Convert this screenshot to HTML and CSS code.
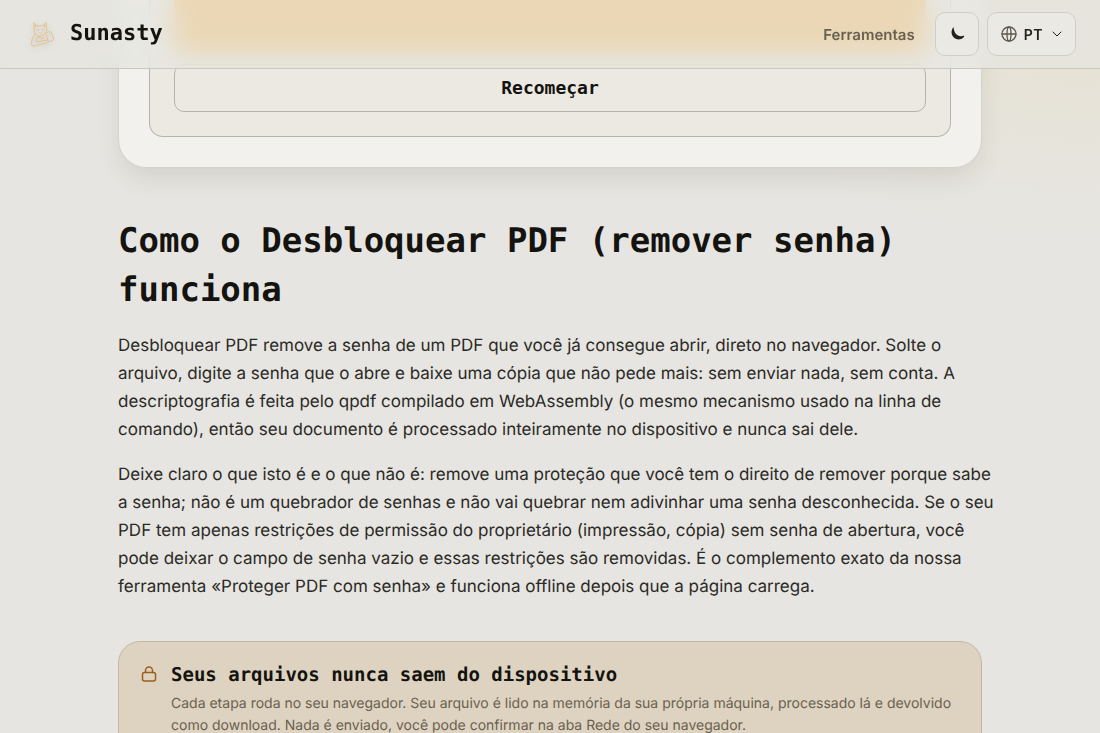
FILE: index.html
```html
<!DOCTYPE html>
<html lang="pt">
<head>
    <meta charset="UTF-8">
    <meta name="viewport" content="width=device-width, initial-scale=1.0">
    <title>Desbloquear PDF - Sunasty</title>
    <link rel="stylesheet" href="styles.css">
</head>
<body>
    <header class="topbar">
        <a class="brand" href="#">
            <svg class="brand-logo" viewBox="0 0 28 28" aria-hidden="true">
                <path d="M6 3 L6 10 Q6 15 11 16 Q17 16 18.500 11 L18 2.500 L14.500 6 Q12 5 9.500 6Z"/>
                <path d="M9 10h1.500M14 10h1.500M11.500 12.500l1 1 1-1M7.500 5v2M16.500 5v2"/>
                <path d="M7 14 Q3.500 18 3.500 23 Q3 26 6 26 L20 22.500 Q22 21 19 20 L9 22 Q7 20 9 17"/>
                <path d="M18.500 13 Q20 11 23 12 L25.500 18 Q26 21 22 21.500M18 14l2 6M10 17q3 2 6 1"/>
            </svg>
            <span>Sunasty</span>
        </a>
        <nav class="topbar-nav">
            <a class="nav-link" href="#">Ferramentas</a>
            <div class="nav-actions">
                <button class="icon-button" type="button" aria-label="Tema">
                    <svg class="icon-moon" viewBox="0 0 16 16" aria-hidden="true">
                        <path d="M4.500 1 C-0.500 7.500 5 14.500 11 13.300 C13.500 13 15 11.500 15.200 9.500 C9.500 12 5 8 4.500 1Z"/>
                    </svg>
                </button>
                <button class="lang-button" type="button" aria-label="Idioma">
                    <svg class="icon-globe" viewBox="0 0 16 16" aria-hidden="true">
                        <circle cx="8" cy="8" r="7"/>
                        <ellipse cx="8" cy="8" rx="2" ry="7"/>
                        <path d="M1 8h14"/>
                    </svg>
                    <span>PT</span>
                    <svg class="icon-chevron" viewBox="0 0 10 10" aria-hidden="true">
                        <path d="M1 3l4 4 4-4"/>
                    </svg>
                </button>
            </div>
        </nav>
    </header>

    <main class="page">
        <section class="tool-card">
            <div class="tool-panel">
                <button class="primary-button" type="button" aria-label="Desbloquear"></button>
                <button class="reset-button" type="button">Recomeçar</button>
            </div>
        </section>

        <section class="about">
            <h2>Como o Desbloquear PDF (remover senha) funciona</h2>
            <p>Desbloquear PDF remove a senha de um PDF que você já consegue abrir, direto no navegador. Solte o arquivo, digite a senha que o abre e baixe uma cópia que não pede mais: sem enviar nada, sem conta. A descriptografia é feita pelo qpdf compilado em WebAssembly (o mesmo mecanismo usado na linha de comando), então seu documento é processado inteiramente no dispositivo e nunca sai dele.</p>
            <p>Deixe claro o que isto é e o que não é: remove uma proteção que você tem o direito de remover porque sabe a senha; não é um quebrador de senhas e não vai quebrar nem adivinhar uma senha desconhecida. Se o seu PDF tem apenas restrições de permissão do proprietário (impressão, cópia) sem senha de abertura, você pode deixar o campo de senha vazio e essas restrições são removidas. É o complemento exato da nossa ferramenta «Proteger PDF com senha» e funciona offline depois que a página carrega.</p>
        </section>

        <aside class="privacy">
            <svg class="icon-lock" viewBox="0 0 16 16" aria-hidden="true">
                <rect x="1.500" y="6.500" width="13" height="8.500" rx="2"/>
                <path d="M4.500 6.500V4.500a3.500 3.500 0 0 1 7 0v2"/>
            </svg>
            <div>
                <h3>Seus arquivos nunca saem do dispositivo</h3>
                <p>Cada etapa roda no seu navegador. Seu arquivo é lido na memória da sua própria máquina, processado lá e devolvido como download. Nada é enviado, você pode confirmar na aba Rede do seu navegador.</p>
            </div>
        </aside>
    </main>
</body>
</html>
```

FILE: styles.css
```css
* {
    box-sizing: border-box;
}
html {
    scrollbar-width: none;
}
body {
    margin: 0;
    font-family: Inter, "Liberation Sans", sans-serif;
    text-rendering: geometricPrecision;
    color: #2b2a26;
    background: radial-gradient(ellipse 420px 240px at 100% 0, #e6e1d1, rgba(230, 225, 209, 0)) no-repeat #e6e5e1;
}
h2, h3, p {
    margin: 0;
}
button {
    font: inherit;
    color: inherit;
    cursor: pointer;
}
svg {
    flex: none;
    fill: none;
    stroke: currentColor;
    stroke-linecap: round;
    stroke-linejoin: round;
}

/* top bar */
.topbar {
    position: fixed;
    top: 0;
    left: 0;
    right: 0;
    z-index: 10;
    display: flex;
    align-items: center;
    justify-content: space-between;
    padding: 12px 24px;
    border-bottom: 1px solid #c9c8c2;
    background: rgba(230, 230, 224, 0.7);
    backdrop-filter: blur(12px);
}
.brand {
    display: flex;
    align-items: center;
    gap: 14px;
    padding-left: 4px;
    font-family: "DejaVu Sans Mono", monospace;
    font-size: 22px;
    line-height: 30px;
    font-weight: 700;
    color: #14130f;
    text-decoration: none;
}
.brand-logo {
    width: 28px;
    height: 28px;
    color: #e9c08c;
    filter: drop-shadow(0 2px 3px rgba(60, 60, 50, 0.2));
}
.topbar-nav {
    display: flex;
    align-items: center;
    gap: 20px;
}
.nav-link {
    font-size: 15px;
    font-weight: 600;
    color: #6a604f;
    text-decoration: none;
}
.nav-actions {
    display: flex;
    gap: 8px;
}
.icon-button, .lang-button {
    display: flex;
    align-items: center;
    justify-content: center;
    height: 44px;
    border: 1px solid #cfcdc6;
    border-radius: 10px;
    background: #ebe9e3;
    color: #22211d;
}
.icon-button {
    width: 44px;
    padding: 0;
}
.lang-button {
    gap: 7px;
    padding: 0 13px;
    font-size: 14px;
    font-weight: 600;
    letter-spacing: 0.5px;
}
.icon-moon {
    width: 16px;
    height: 16px;
    fill: currentColor;
    stroke: none;
}
.icon-globe {
    width: 16px;
    height: 16px;
    color: #5c584e;
    stroke-width: 1.3;
}
.icon-chevron {
    width: 10px;
    height: 10px;
    margin-left: 2px;
}

/* content */
.page {
    max-width: 912px;
    margin: 0 auto;
    padding: 0 24px 48px;
}
.tool-card {
    padding: 0 30px 30px;
    border: 1px solid #d3d2cb;
    border-top: 0;
    border-radius: 0 0 28px 28px;
    background: #f2f1ed;
    box-shadow: 0 12px 28px -6px rgba(70, 66, 40, 0.14);
}
.tool-panel {
    display: flex;
    flex-direction: column;
    gap: 12px;
    padding: 0 24px 24px;
    border: 1px solid #b5b3ac;
    border-top: 0;
    border-radius: 0 0 14px 14px;
    background: #ece9e3;
}
.primary-button {
    height: 52px;
    border: 0;
    border-radius: 0 0 10px 10px;
    background: #f7b550;
}
.reset-button {
    height: 48px;
    padding: 0 0 2px;
    border: 1px solid #b5b3ac;
    border-radius: 10px;
    background: #ece9e3;
    font-family: "DejaVu Sans Mono", monospace;
    font-size: 18px;
    font-weight: 700;
    color: #14130f;
}
.about {
    display: flex;
    flex-direction: column;
    gap: 17px;
    margin: 49px -16px 0 0;
    font-size: 17px;
    line-height: 28px;
}
.about h2 {
    font-family: "DejaVu Sans Mono", monospace;
    font-size: 34px;
    line-height: 49px;
    color: #14130f;
}
.privacy {
    display: flex;
    gap: 14px;
    margin-top: 40px;
    padding: 20px 22px;
    border: 1px solid #c4b8a5;
    border-radius: 22px;
    background: #ddd3c0;
}
.icon-lock {
    width: 16px;
    height: 16px;
    margin-top: 4px;
    color: #9c5f1c;
    stroke-width: 1.5;
}
.privacy h3 {
    font-family: "DejaVu Sans Mono", monospace;
    font-size: 19px;
    line-height: 26px;
    color: #14130f;
}
.privacy p {
    margin-top: 5px;
    font-size: 14px;
    line-height: 22px;
    color: #6a604f;
}
```
